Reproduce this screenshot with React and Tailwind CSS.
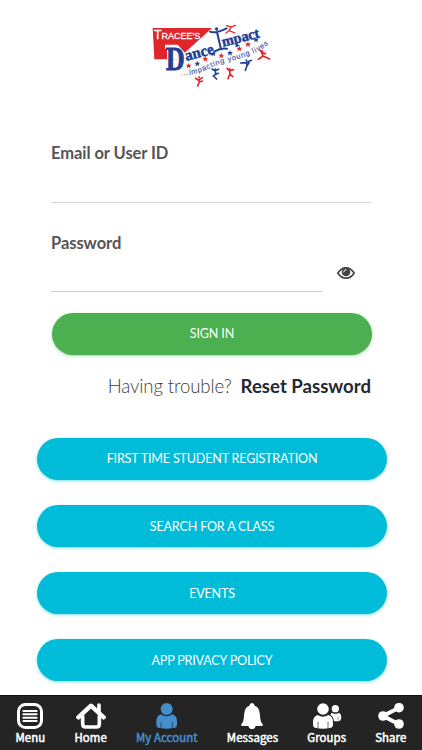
import { useState } from "react";

const links = [
  "First Time Student Registration",
  "Search for a Class",
  "Events",
  "App Privacy Policy",
];

// [x, y, color] of the small stars under the "Dance Impact" lettering
const stars = [
  [131, 137, "#e0262b"],
  [157, 131, "#223f92"],
  [181, 117, "#e0262b"],
  [205, 101, "#223f92"],
  [229, 107, "#e0262b"],
  [255, 99, "#223f92"],
  [283, 86, "#e0262b"],
  [309, 73, "#e0262b"],
  [333, 59, "#223f92"],
];

const dancers = [
  { x: 162, y: 183, color: "#e0262b", d: "M-10 -8 L-3 -3 L2 -5 L10 -10 M0 -4 L1 3 L-4 15 M1 3 L10 0" },
  { x: 211, y: 159, color: "#223f92", d: "M-10 -12 L-1 -7 L10 -11 M0 -7 L1 4 L-6 9 L4 18 M1 4 L9 1" },
  { x: 254, y: 158, color: "#e0262b", d: "M-8 -13 L-1 -6 L11 -9 M0 -6 L1 4 L-5 18 M1 4 L9 12" },
  { x: 304, y: 132, color: "#223f92", d: "M-17 -3 L-2 -4 L15 -11 M0 -4 L2 5 L-3 19 M2 5 L8 -4" },
  { x: 352, y: 104, color: "#e0262b", d: "M-7 -14 L-2 -6 L9 -3 M-2 -6 L2 4 L-12 14 M2 4 L22 13" },
];

function Logo() {
  return (
    <svg className="h-[72px] w-[132px]" viewBox="0 0 396 216">
      <path d="M23 24 L201 24 L98 118 L28 118 Z" fill="#e0262b" />
      {/* white gap between the flag and the big D */}
      <path d="M60 74 H98 L120 98 V118 H66 V86 H60 Z" fill="#fff" />
      <text x="27" y="57" fontFamily="'Liberation Sans', sans-serif" fontSize="29" fill="#fff" stroke="#fff" strokeWidth="0.8" textLength="139" lengthAdjust="spacingAndGlyphs">
        <tspan fontSize="40">T</tspan>RACEE'S
      </text>
      <g fontFamily="'Liberation Serif', serif" fontWeight="700" fill="#223f92" stroke="#223f92">
        <text x="63" y="149" fontSize="104" textLength="56" lengthAdjust="spacingAndGlyphs" strokeWidth="3">D</text>
        <text transform="translate(124 123) rotate(-15)" fontSize="47" textLength="88" lengthAdjust="spacingAndGlyphs" strokeWidth="1.5">ance</text>
        <text transform="translate(234 80) rotate(-14)" fontSize="44" textLength="115" lengthAdjust="spacingAndGlyphs" strokeWidth="1.5">mpact</text>
      </g>
      <path d="M195 35 Q210 42 245 25 M216 36 L228 88 M209 94 Q227 83 246 86" fill="none" stroke="#223f92" strokeWidth="6" strokeLinecap="round" />
      <circle cx="215" cy="27" r="5" fill="#223f92" />
      <path d="M245 17 L258 21 L271 16 M258 22 L252 32 L243 39 M252 32 L270 39" fill="none" stroke="#e0262b" strokeWidth="4" strokeLinecap="round" />
      {stars.map(([x, y, color]) => (
        <path
          key={`${x}-${y}`}
          transform={`translate(${x} ${y})`}
          d="M0 -9 L2 -3 L9 -3 L4 1 L6 8 L0 4 L-6 8 L-4 1 L-9 -3 L-2 -3 Z"
          fill={color}
        />
      ))}
      <path id="tagline" d="M108 166 C165 166 188 142 239 128 C291 114 335 103 373 70" fill="none" />
      <text fontFamily="'Liberation Sans', sans-serif" fontSize="22" fill="#465da3" stroke="#465da3" strokeWidth="0.5">
        <textPath href="#tagline" textLength="281" lengthAdjust="spacing">...impacting young lives</textPath>
      </text>
      {dancers.map(({ x, y, color, d }) => (
        <g key={x} transform={`translate(${x} ${y})`}>
          <circle cx="0" cy="-11" r="3" fill={color} />
          <path d={d} fill="none" stroke={color} strokeWidth="5" strokeLinecap="round" strokeLinejoin="round" />
        </g>
      ))}
    </svg>
  );
}

function EyeIcon() {
  return (
    <svg className="h-3 w-[18px]" viewBox="0 0 54 36">
      <path d="M2.5 18 Q12 2.5 27 2.5 Q42 2.5 51.5 18 Q42 33.5 27 33.5 Q12 33.5 2.5 18 Z" fill="none" stroke="#444" strokeWidth="5" />
      <circle cx="27" cy="15" r="13" fill="#444" />
      <path d="M20 15 Q20 8 27 8" fill="none" stroke="#fff" strokeWidth="3" strokeLinecap="round" />
    </svg>
  );
}

function MenuIcon() {
  return (
    <svg className="h-[26px] w-[26px]" viewBox="0 0 78 78" fill="none" stroke="currentColor">
      <rect x="4.5" y="4.5" width="69" height="69" rx="21" strokeWidth="9" />
      <path d="M19 24 H59 M19 34 H59 M19 44 H59 M19 54 H59" strokeWidth="6" strokeLinecap="round" />
    </svg>
  );
}

function HomeIcon() {
  return (
    <svg className="h-[26px] w-[30px]" viewBox="0 0 90 78" fill="none" stroke="currentColor" strokeLinecap="round" strokeLinejoin="round">
      <path d="M7 43 L45 8 L83 43" strokeWidth="13" />
      <path d="M69 6 V28" strokeWidth="11" />
      <path d="M20 40 V62 Q20 72 29 72 H61 Q70 72 70 62 V40" strokeWidth="11" />
    </svg>
  );
}

function AccountIcon() {
  return (
    <svg className="h-[26px] w-[22px]" viewBox="0 0 66 78" fill="currentColor">
      <circle cx="32" cy="18" r="18" />
      <path d="M15 34 Q32 46 49 34 Q63 38 63 56 V65 Q63 74 52 75 Q32 79 12 75 Q1 74 1 65 V56 Q1 38 15 34 Z" />
      <path d="M15 57 V77 M49 57 V77" stroke="#242424" strokeWidth="2" />
    </svg>
  );
}

function BellIcon() {
  return (
    <svg className="h-[26px] w-[22px]" viewBox="0 0 66 78" fill="currentColor">
      <path d="M33 0 Q40 0 41 8 Q54 12 56 29 L58 48 Q59 58 65 63 V69 H1 V63 Q7 58 8 48 L10 29 Q12 12 25 8 Q26 0 33 0 Z" />
      <path d="M22 68 H44 Q42 78 33 78 Q24 78 22 68 Z" />
    </svg>
  );
}

function GroupsIcon() {
  return (
    <svg className="h-[26px] w-[30px]" viewBox="0 0 90 78" fill="currentColor">
      <circle cx="33" cy="18" r="17.5" />
      <path d="M17 36 Q33 47 49 36 Q63 41 63 57 V65 Q63 74 53 75 Q33 79 13 75 Q3 74 3 65 V57 Q3 41 17 36 Z" />
      <path d="M18 56 V76 M48 56 V76" stroke="#242424" strokeWidth="2" />
      <circle cx="70" cy="17" r="11" />
      <path d="M59 29 Q70 36 81 29 Q88 33 88 42 Q88 54 78 55 H66 Q65 42 55 35 Z" />
      <path d="M78 42 V53" stroke="#242424" strokeWidth="1.5" />
    </svg>
  );
}

function ShareIcon() {
  return (
    <svg className="h-[26px] w-[26px]" viewBox="0 0 78 78" fill="currentColor">
      <path d="M63 14 L15 39 L63 64" fill="none" stroke="currentColor" strokeWidth="12" />
      <circle cx="63" cy="14" r="14.5" />
      <circle cx="15" cy="39" r="14.5" />
      <circle cx="63" cy="63" r="14.5" />
    </svg>
  );
}

const tabs = [
  { name: "Menu", Icon: MenuIcon },
  { name: "Home", Icon: HomeIcon },
  { name: "My Account", Icon: AccountIcon },
  { name: "Messages", Icon: BellIcon },
  { name: "Groups", Icon: GroupsIcon },
  { name: "Share", Icon: ShareIcon },
];

export default function App() {
  const [activeTab, setActiveTab] = useState("My Account");
  const [showPassword, setShowPassword] = useState(false);

  return (
    <div className="flex h-[750px] w-[422px] flex-col overflow-hidden bg-white font-['Lato',sans-serif]">
      <header className="flex justify-center pt-5">
        <Logo />
      </header>

      <main className="flex-1">
        <form className="px-[51px] pt-[49px]" onSubmit={(e) => e.preventDefault()}>
          <label htmlFor="email" className="block text-[16.5px] leading-6 font-bold tracking-[-0.06px] text-[#555]">
            Email or User ID
          </label>
          <input id="email" type="text" className="block h-[38px] w-full border-b border-[#d4d4d4] outline-none" />

          <label htmlFor="password" className="mt-7 block text-[16.5px] leading-6 font-bold tracking-[-0.06px] text-[#555]">
            Password
          </label>
          <div className="flex">
            <input
              id="password"
              type={showPassword ? "text" : "password"}
              className="h-[37px] w-[271px] border-b border-[#ccc] outline-none"
            />
            <button type="button" aria-label="Show password" className="ml-[15px] h-[35px]" onClick={() => setShowPassword(!showPassword)}>
              <EyeIcon />
            </button>
          </div>

          <button
            type="submit"
            className="mt-[20.7px] ml-px h-[42px] w-80 rounded-full bg-[#4caf50] pt-0.5 text-[12.6px] tracking-[-0.17px] text-white uppercase shadow-[0_1px_3px_rgba(76,175,80,0.5)]"
          >
            Sign In
          </button>
          <div className="mt-[19.3px] flex items-baseline justify-end gap-[9px] leading-6 whitespace-nowrap">
            <span className="text-[18.6px] font-light tracking-[-0.1px] text-[#3c3c3c]">Having trouble?</span>
            <a className="text-[18.6px] font-bold text-[#252733]">Reset Password</a>
          </div>
        </form>

        <div className="mt-[39.8px] flex flex-col gap-[25.2px] px-[37px]">
          {links.map((link) => (
            <button
              key={link}
              className="h-[42px] w-[350px] rounded-full bg-[#00bcd9] pt-0.5 text-[12.6px] tracking-[-0.2px] text-white uppercase shadow-[0_1px_3px_rgba(0,188,217,0.5)]"
            >
              {link}
            </button>
          ))}
        </div>
      </main>

      <nav className="flex h-[55px] shrink-0 items-start justify-between border-t border-[#111] bg-[#242424] px-[15.5px] pt-[7px] font-['Noto_Sans_CJK_SC',sans-serif]">
        {tabs.map(({ name, Icon }) => (
          <button
            key={name}
            onClick={() => setActiveTab(name)}
            className={`flex flex-col items-center text-[11.4px] leading-4 font-normal tracking-[0.1px] whitespace-nowrap [-webkit-text-stroke:0.5px_currentColor] ${
              activeTab === name ? "text-[#438fce]" : "text-white"
            }`}
          >
            <Icon />
            <span>{name}</span>
          </button>
        ))}
      </nav>
    </div>
  );
}
